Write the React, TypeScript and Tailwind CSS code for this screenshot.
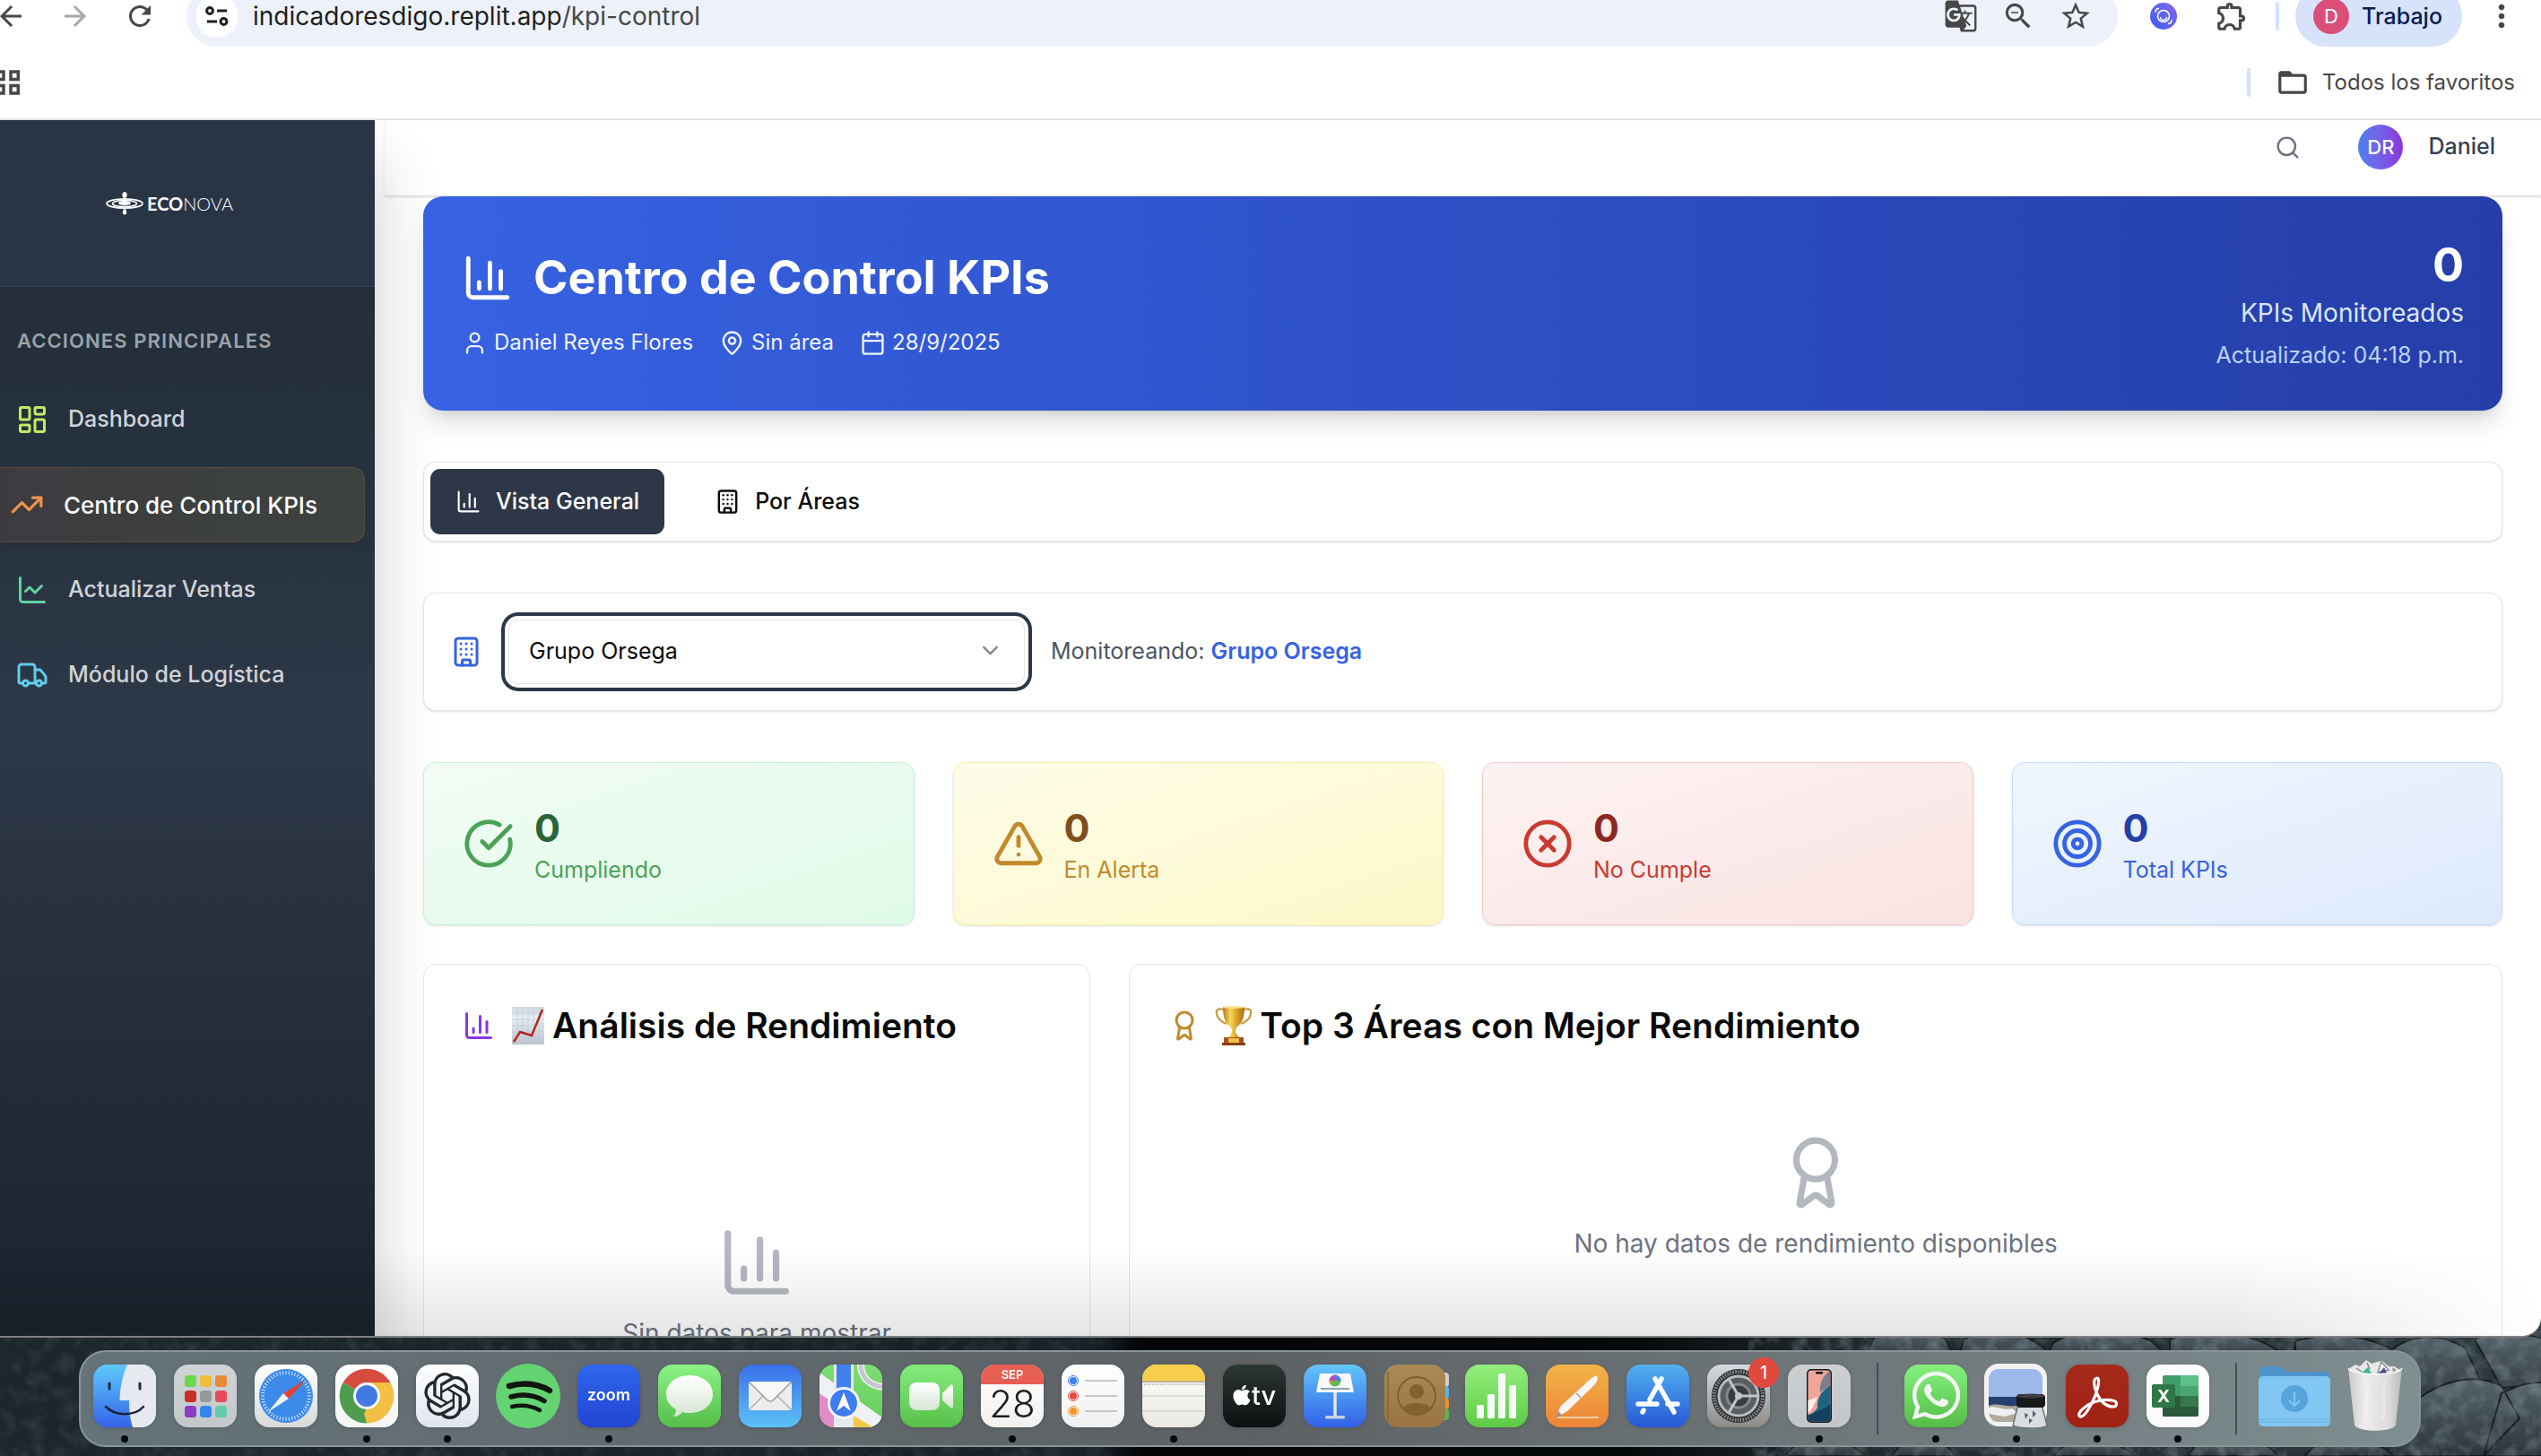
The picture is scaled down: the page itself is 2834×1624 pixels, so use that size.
import type { ComponentType, ReactNode } from "react";
import {
  Award,
  Building,
  Calendar,
  ChartColumn,
  ChartLine,
  ChevronDown,
  CircleCheckBig,
  CircleX,
  LayoutDashboard,
  MapPin,
  Search,
  Target,
  TrendingUp,
  TriangleAlert,
  Truck,
  User,
} from "lucide-react";
import {
  MdArrowBack,
  MdArrowForward,
  MdFolderOpen,
  MdGTranslate,
  MdMoreVert,
  MdOutlineExtension,
  MdRefresh,
  MdStarBorder,
  MdZoomOut,
} from "react-icons/md";
import { FaApple, FaWhatsapp } from "react-icons/fa";
import { SiOpenai } from "react-icons/si";

/* ---------- Browser chrome ---------- */

function BrowserBar() {
  return (
    <header className="relative z-20 h-[134px] shrink-0 overflow-hidden border-b-2 border-[#e1e3e1] bg-white text-[#474747]">
      <div className="-mt-4 flex h-[68px] items-center">
        <button aria-label="Atrás" className="-ml-1.5">
          <MdArrowBack size={36} />
        </button>
        <button aria-label="Adelante" className="ml-9 text-[#a8a8a8]">
          <MdArrowForward size={36} />
        </button>
        <button aria-label="Recargar" className="ml-9">
          <MdRefresh size={36} />
        </button>
        <div className="ml-[34px] flex h-[68px] flex-1 items-center rounded-full bg-[#edf2fa] pr-7 pl-[10px]">
          <button aria-label="Información del sitio" className="flex size-12 items-center justify-center rounded-full bg-white text-[#1f1f1f]">
            <svg width="26" height="26" viewBox="0 0 26 26" fill="none" stroke="currentColor" strokeWidth="3">
              <circle cx="5" cy="7" r="3.4" />
              <path d="M13 7h11M2 19h11" />
              <circle cx="20.5" cy="19" r="3.4" />
            </svg>
          </button>
          <span className="ml-4 text-[28px] leading-9 text-[#1f1f1f]">
            indicadoresdigo.replit.app<span className="text-[#474747]">/kpi-control</span>
          </span>
          <div className="ml-auto flex items-center gap-[26px]">
            <button aria-label="Traducir">
              <MdGTranslate size={38} />
            </button>
            <button aria-label="Zoom">
              <MdZoomOut size={38} />
            </button>
            <button aria-label="Favorito">
              <MdStarBorder size={38} />
            </button>
          </div>
        </div>
        <button aria-label="Extensión" className="ml-9">
          <svg width="30" height="30" viewBox="0 0 30 30" fill="none">
            <defs>
              <linearGradient id="ext" x1="1" y1="0" x2="0" y2="1">
                <stop offset="0" stopColor="#8566f0" />
                <stop offset="1" stopColor="#3b5fe8" />
              </linearGradient>
            </defs>
            <circle cx="15" cy="15" r="15" fill="url(#ext)" />
            <circle cx="15" cy="15" r="6.5" stroke="#fff" strokeWidth="1.5" />
            <path d="M11.5 16a3.5 3.5 0 0 0 7 0M6 11c0-3 1-4.500 4-4.500M24 19c0 3-1 4.500-4 4.500" stroke="#fff" strokeWidth="1.500" />
          </svg>
        </button>
        <button aria-label="Extensiones" className="ml-[42px]">
          <MdOutlineExtension size={38} />
        </button>
        <span className="ml-[30px] h-8 w-1 rounded-full bg-[#d3e1fb]" />
        <button className="ml-[18px] flex h-[68px] items-center gap-[14px] rounded-full bg-[#d7e2fb] pr-[22px] pl-5 text-[#0b1d51]">
          <span className="flex size-10 items-center justify-center rounded-full bg-[#da4f7a] text-[22px] text-white">D</span>
          <span className="text-[25px] leading-9 font-medium">Trabajo</span>
        </button>
        <button aria-label="Menú" className="mr-6 ml-6">
          <MdMoreVert size={40} />
        </button>
      </div>
      <div className="flex h-20 items-center pr-[29px]">
        <button aria-label="Aplicaciones">
          <svg width="22" height="28" viewBox="0 0 22 28" fill="none" stroke="currentColor" strokeWidth="3.500">
            <path d="M-6 2H4v8.500H-6zM12 2h8.300v8.500H12zM-6 17.500H4V26H-6zM12 17.500h8.300V26H12z" />
          </svg>
        </button>
        <span className="ml-auto h-8 w-1 rounded-full bg-[#d3e1fb]" />
        <button className="ml-7 flex items-center gap-[14px] text-[24px] leading-9">
          <MdFolderOpen size={38} />
          Todos los favoritos
        </button>
      </div>
    </header>
  );
}

/* ---------- Sidebar ---------- */

type IconType = ComponentType<{ size?: number; className?: string; strokeWidth?: number }>;

const navItems: { label: string; icon: IconType; color: string; active?: boolean }[] = [
  { label: "Dashboard", icon: LayoutDashboard, color: "text-[#c0ec63]" },
  { label: "Centro de Control KPIs", icon: TrendingUp, color: "text-[#f0954a]", active: true },
  { label: "Actualizar Ventas", icon: ChartLine, color: "text-[#62d29d]" },
  { label: "Módulo de Logística", icon: Truck, color: "text-[#5fcdec]" },
];

function Logo() {
  return (
    <div className="flex items-center gap-1 text-white">
      <svg width="42" height="26" viewBox="0 0 42 26" fill="none" stroke="currentColor">
        <ellipse cx="21" cy="13" rx="20" ry="5.200" strokeWidth="1.800" />
        <ellipse cx="21" cy="13" rx="13.500" ry="3.600" strokeWidth="1.600" />
        <ellipse cx="21" cy="12.500" rx="7" ry="2.400" fill="currentColor" stroke="none" />
        <path d="M21 8v5" strokeWidth="1.500" />
        <ellipse cx="21" cy="3.500" rx="2.600" ry="3.500" fill="currentColor" stroke="none" />
        <path d="M21 18c1.500 2 2.200 3.500 2.200 5a2.200 2.600 0 0 1-4.400 0c0-1.500.7-3 2.200-5z" fill="currentColor" stroke="none" />
      </svg>
      <span className="font-[Lato] text-[20px] leading-6">
        <b className="font-bold">ECO</b>
        <span className="font-light">NOVA</span>
      </span>
    </div>
  );
}

function Sidebar() {
  return (
    <aside className="relative z-10 flex w-[418px] shrink-0 flex-col bg-linear-to-b from-[#1f2a34] via-[#2d3848] to-[#1b232e] shadow-[0_45px_70px_rgba(0,0,0,0.2)]">
      <div className="flex h-[186px] shrink-0 items-center justify-center border-b border-[#36445a] bg-[#293545] pr-10">
        <Logo />
      </div>
      <nav aria-label="Acciones principales" className="flex flex-col pt-[42px]">
        <h2 className="pl-[19px] text-[22px] leading-9 font-semibold tracking-wider text-[#9da2a8]">ACCIONES PRINCIPALES</h2>
        <ul className="mt-7 flex flex-col gap-[11px] pr-[11px]">
          {navItems.map(({ label, icon: Icon, color, active }) => (
            <li key={label}>
              <a
                href="#"
                className={
                  active
                    ? "flex h-[84px] items-center gap-[22px] rounded-r-[14px] border border-l-0 border-[#5e4d3c] bg-linear-to-r from-[#3e3b40] to-[#3c433f] pl-[11px] text-[26px] font-medium text-white shadow-lg"
                    : "flex h-[84px] items-center gap-[22px] pl-[18px] text-[25px] font-medium text-[#d0d3d7]"
                }
              >
                <Icon size={active ? 38 : 36} className={color} />
                {label}
              </a>
            </li>
          ))}
        </ul>
      </nav>
    </aside>
  );
}

/* ---------- Dashboard ---------- */

function TopBar() {
  return (
    <div className="ml-[11px] flex h-[85px] shrink-0 items-start justify-end border-b border-[#dedfe1] bg-white pt-[5px] pr-[51px] shadow-sm">
      <div className="flex h-[50px] items-center">
        <button aria-label="Buscar" className="mr-16 text-[#6b7280]">
          <Search size={29} />
        </button>
        <button className="flex items-center gap-7">
          <span className="flex size-[50px] items-center justify-center rounded-full bg-linear-to-r from-[#4a80f0] to-[#8b33dd] text-[22px] font-medium text-white">
            DR
          </span>
          <span className="text-[25px] font-medium text-[#374151]">Daniel</span>
        </button>
      </div>
    </div>
  );
}

function Meta({ icon: Icon, children }: { icon: IconType; children: ReactNode }) {
  return (
    <span className="flex items-center gap-[7px]">
      <Icon size={29} />
      {children}
    </span>
  );
}

function Banner() {
  return (
    <section className="flex items-center justify-between rounded-[22px] bg-linear-to-r from-[#3762e3] to-[#253ea8] px-[43px] py-11 text-white shadow-[0_18px_27px_-5px_rgba(0,0,0,0.14),0_7px_11px_-7px_rgba(0,0,0,0.12)]">
      <div className="flex flex-col gap-[22px]">
        <h1 className="flex items-center gap-[22px] text-[52px] leading-[65px] font-bold">
          <ChartColumn size={58} />
          Centro de Control KPIs
        </h1>
        <div className="flex items-center gap-[29px] text-[24px] leading-9 text-[#eef3fe]">
          <Meta icon={User}>Daniel Reyes Flores</Meta>
          <Meta icon={MapPin}>Sin área</Meta>
          <Meta icon={Calendar}>28/9/2025</Meta>
        </div>
      </div>
      <div className="text-right">
        <p className="text-[52px] leading-[65px] font-bold">0</p>
        <p className="text-[28px] leading-[43px] text-[#dbe6fb]">KPIs Monitoreados</p>
        <p className="mt-[7px] text-[25px] leading-9 text-[#bcd2f8]">Actualizado: 04:18 p.m.</p>
      </div>
    </section>
  );
}

function Tabs() {
  return (
    <div role="tablist" className="flex shrink-0 gap-7 rounded-[14px] border border-[#e5e5e5] bg-white p-[7px] shadow-sm">
      <button
        role="tab"
        aria-selected="true"
        className="flex h-[73px] items-center gap-4 rounded-[11px] bg-[#2d3748] px-7 text-[25px] font-medium text-white"
      >
        <ChartColumn size={29} strokeWidth={1.8} />
        Vista General
      </button>
      <button role="tab" aria-selected="false" className="flex h-[73px] items-center gap-4 px-7 text-[25px] font-medium text-[#0a0a0a]">
        <Building size={29} />
        Por Áreas
      </button>
    </div>
  );
}

function Filter() {
  return (
    <section className="flex shrink-0 items-center gap-[29px] rounded-[14px] border border-[#e5e5e5] bg-white p-[29px] shadow-sm">
      <Building size={36} className="text-[#3662e3]" />
      <div className="relative w-[576px]">
        <select
          aria-label="Empresa"
          className="h-[72px] w-full appearance-none rounded-[11px] border border-[#e5e5e5] bg-white pl-[22px] text-[25px] text-[#0a0a0a] ring-4 ring-[#2d3748] ring-offset-4 outline-none"
          defaultValue="Grupo Orsega"
        >
          <option>Grupo Orsega</option>
        </select>
        <ChevronDown size={29} className="pointer-events-none absolute top-5 right-6 text-[#858585]" />
      </div>
      <p className="text-[25px] text-[#4b5563]">
        Monitoreando: <strong className="font-semibold text-[#3662e3]">Grupo Orsega</strong>
      </p>
    </section>
  );
}

const stats: { label: string; icon: IconType; card: string; iconColor: string; value: string; text: string }[] = [
  {
    label: "Cumpliendo",
    icon: CircleCheckBig,
    card: "border-[#c6f2d3] from-[#f2fcf5] to-[#dffae8]",
    iconColor: "text-[#4ba255]",
    value: "text-[#2c6438]",
    text: "text-[#4ba255]",
  },
  {
    label: "En Alerta",
    icon: TriangleAlert,
    card: "border-[#fbf0a0] from-[#fefce9] to-[#fdf8c8]",
    iconColor: "text-[#c18a2c]",
    value: "text-[#7d4f1e]",
    text: "text-[#c18a2c]",
  },
  {
    label: "No Cumple",
    icon: CircleX,
    card: "border-[#f6c9c8] from-[#fdf3f2] to-[#f9e3e2]",
    iconColor: "text-[#ca3a31]",
    value: "text-[#8c2822]",
    text: "text-[#ca3a31]",
  },
  {
    label: "Total KPIs",
    icon: Target,
    card: "border-[#c4daf9] from-[#f0f6fe] to-[#dde9fc]",
    iconColor: "text-[#3662e3]",
    value: "text-[#253ea8]",
    text: "text-[#3662e3]",
  },
];

function Stats() {
  return (
    <section className="grid grid-cols-4 gap-[43px]">
      {stats.map(({ label, icon: Icon, card, iconColor, value, text }) => (
        <div key={label} className={`flex items-center gap-[22px] rounded-[14px] border bg-linear-to-br px-[43px] py-[43px] shadow-sm ${card}`}>
          <Icon size={58} className={iconColor} />
          <div>
            <p className={`text-[43px] leading-[58px] font-bold ${value}`}>0</p>
            <p className={`text-[25px] leading-9 ${text}`}>{label}</p>
          </div>
        </div>
      ))}
    </section>
  );
}

function ChartEmoji() {
  return (
    <svg width="38" height="44" viewBox="0 0 38 44" role="img" aria-label="Gráfico">
      <defs>
        <linearGradient id="chartBg" x1="0" y1="0" x2="0" y2="1">
          <stop offset="0" stopColor="#cfd9e2" />
          <stop offset=".3" stopColor="#e6edf4" />
          <stop offset="1" stopColor="#bcc4cd" />
        </linearGradient>
      </defs>
      <rect x="1" y="1" width="36" height="42" fill="url(#chartBg)" />
      <path d="M1 8h36M1 15h36M1 22h36M1 29h36M1 36h36M7 1v42M13 1v42M19 1v42M25 1v42M31 1v42" stroke="#b5c6d6" strokeWidth=".6" />
      <path d="M3 40l7-11 13 4L35 4" fill="none" stroke="#b5221c" strokeWidth="2.400" />
    </svg>
  );
}

function TrophyEmoji() {
  return (
    <svg width="42" height="46" viewBox="0 0 42 46" role="img" aria-label="Trofeo">
      <defs>
        <linearGradient id="gold" x1="0" x2="1">
          <stop offset="0" stopColor="#b9791a" />
          <stop offset=".35" stopColor="#f8d860" />
          <stop offset=".6" stopColor="#e0a52a" />
          <stop offset="1" stopColor="#a96c13" />
        </linearGradient>
      </defs>
      <path d="M9 5C3 3 1 6 2 10c1 6 6 9 11 11M33 5c6-2 8 1 7 5-1 6-6 9-11 11" fill="none" stroke="#c99a3b" strokeWidth="2.200" />
      <path d="M9 2h24c0 13-3 18-8 22-2 2-2 4-2 6 1 3 3 4 4 6H15c1-2 3-3 4-6 0-2 0-4-2-6C12 20 9 15 9 2z" fill="url(#gold)" />
      <ellipse cx="21" cy="2.500" rx="12" ry="1.500" fill="#f9e08a" />
      <path d="M10 36h22v9H10z" fill="#a8521f" />
      <path d="M8 42h26v3H8z" fill="#8a3d16" />
      <path d="M15 37h12v5H15z" fill="#f0c24a" />
    </svg>
  );
}

function Panels() {
  return (
    <section className="grid grid-cols-3 gap-[43px]">
      <article className="h-[620px] rounded-[14px] border border-[#e5e5e5] bg-white p-[43px]">
        <h2 className="flex items-center text-[39px] leading-[50px] font-semibold text-[#0a0a0a]">
          <ChartColumn size={36} className="mr-[18px] text-[#8a37e0]" />
          <ChartEmoji />
          <span className="ml-2 whitespace-nowrap">Análisis de Rendimiento</span>
        </h2>
        <div className="mt-[196px] flex flex-col items-center text-[28px] leading-[43px] text-[#6b7280]">
          <ChartColumn size={86} className="text-[#b3b7bf]" />
          <p className="mt-[15px]">Sin datos para mostrar</p>
        </div>
      </article>
      <article className="col-span-2 rounded-[14px] border border-[#e5e5e5] bg-white p-[43px]">
        <h2 className="flex items-center text-[39px] leading-[50px] font-semibold text-[#0a0a0a]">
          <Award size={36} className="mr-4 text-[#c18a2c]" />
          <TrophyEmoji />
          <span className="ml-2">Top 3 Áreas con Mejor Rendimiento</span>
        </h2>
        <div className="mt-24 flex flex-col items-center text-[28px] leading-[43px] text-[#6b7280]">
          <Award size={86} className="text-[#b3b7bf]" />
          <p className="mt-[15px]">No hay datos de rendimiento disponibles</p>
        </div>
      </article>
    </section>
  );
}

/* ---------- Dock ---------- */

function Tile({ id, from, to, children }: { id: string; from: string; to: string; children?: ReactNode }) {
  return (
    <svg width="70" height="70" viewBox="0 0 70 70" className="drop-shadow-sm">
      <defs>
        <linearGradient id={`t-${id}`} x1="0" y1="0" x2="0" y2="1">
          <stop offset="0" stopColor={from} />
          <stop offset="1" stopColor={to} />
        </linearGradient>
        <clipPath id={`c-${id}`}>
          <rect width="70" height="70" rx="16" />
        </clipPath>
        <linearGradient id={`w-${id}`} x1="0" y1="0" x2="0" y2="1">
          <stop offset="0" stopColor="#ffffff" />
          <stop offset="1" stopColor="#d5e5d2" />
        </linearGradient>
      </defs>
      <g clipPath={`url(#c-${id})`}>
        <rect width="70" height="70" fill={`url(#t-${id})`} />
        {children}
      </g>
    </svg>
  );
}

const launchpadColors = ["#6bd84d", "#f2bd3c", "#e88a35", "#c72f26", "#95999c", "#e64c58", "#8a3cc4", "#3486ee", "#62cbaa"];
const ticks = Array.from({ length: 48 }, (_, i) => i * 7.5);

const mainApps: { name: string; running?: boolean; badge?: string; art: ReactNode }[] = [
  {
    name: "Finder",
    running: true,
    art: (
      <Tile id="finder" from="#5ec9fa" to="#3564ea">
        <path d="M38 0C32 14 30 26 29.500 40H40c0 12 1 20 4 30h26V0z" fill="#e6e9ef" />
        <path d="M18 21v6M52 21v6" stroke="#1c2b45" strokeWidth="3" strokeLinecap="round" />
        <path d="M14 47c11 11 32 11 42 0" fill="none" stroke="#1b2436" strokeWidth="2.500" strokeLinecap="round" />
      </Tile>
    ),
  },
  {
    name: "Launchpad",
    art: (
      <Tile id="launch" from="#d0d4d7" to="#c3c8cb">
        {launchpadColors.map((c, i) => (
          <rect key={c} x={12 + (i % 3) * 17} y={12 + Math.floor(i / 3) * 17} width="13" height="13" rx="3.500" fill={c} />
        ))}
      </Tile>
    ),
  },
  {
    name: "Safari",
    art: (
      <Tile id="safari" from="#ffffff" to="#d9d9da">
        <circle cx="35" cy="35" r="30" fill="#3c8bea" />
        {ticks.map((a) => (
          <path key={a} d="M35 7v4" stroke="#dcecff" strokeWidth="1" transform={`rotate(${a} 35 35)`} />
        ))}
        <path d="M57 17L38 38l-6-6z" fill="#e6402f" />
        <path d="M15 53l17-21 6 6z" fill="#f2f4f7" />
      </Tile>
    ),
  },
  {
    name: "Chrome",
    running: true,
    art: (
      <Tile id="chrome" from="#ffffff" to="#f5f5f5">
        <path d="M35 35L8.600 20A30.500 30.500 0 0 1 61.400 20z" fill="#d84c3e" />
        <path d="M35 35l26.400-15A30.500 30.500 0 0 1 35 65.500z" fill="#f3bf45" />
        <path d="M35 35L35 65.500A30.500 30.500 0 0 1 8.600 20z" fill="#4f9c51" />
        <path d="M35 20h26.400l-13.400 22z" fill="#f3bf45" />
        <path d="M48 42L35 65.500 30 48z" fill="#f3bf45" />
        <path d="M8.600 20L22 43l13 6-8 16z" fill="#4f9c51" />
        <circle cx="35" cy="35" r="15" fill="#fff" />
        <circle cx="35" cy="35" r="12" fill="#4379e3" />
      </Tile>
    ),
  },
  {
    name: "ChatGPT",
    running: true,
    art: (
      <Tile id="gpt" from="#ffffff" to="#dfe5f0">
        <SiOpenai x="9" y="9" size={52} color="#23282e" />
      </Tile>
    ),
  },
  {
    name: "Spotify",
    art: (
      <svg width="72" height="72" viewBox="0 0 72 72">
        <circle cx="36" cy="36" r="36" fill="#63d471" />
        <g fill="none" stroke="#101510" strokeLinecap="round">
          <path d="M15 25c15-4 31-3 45 5" strokeWidth="6.500" />
          <path d="M17 37c13-3.500 26-2 37 4.500" strokeWidth="5.500" />
          <path d="M18 48c11-2.500 21-1.500 31 4" strokeWidth="4.500" />
        </g>
      </svg>
    ),
  },
  {
    name: "Zoom",
    running: true,
    art: (
      <Tile id="zoom" from="#2f66ee" to="#2145d2">
        <text x="35" y="40" textAnchor="middle" fontSize="18" fontWeight="600" fill="#fff">
          zoom
        </text>
      </Tile>
    ),
  },
  {
    name: "Mensajes",
    art: (
      <Tile id="msg" from="#8bf285" to="#55be48">
        <path d="M35 12c15 0 26 9 26 21S50 54 35 54c-3 0-5 0-8-1-2 3-6 5-10 5 2-2 3-5 3-8C13 46 9 40 9 33c0-12 11-21 26-21z" fill="url(#w-msg)" />
      </Tile>
    ),
  },
  {
    name: "Mail",
    art: (
      <Tile id="mail" from="#3a6fe9" to="#5cc2f8">
        <rect x="11" y="19" width="48" height="32" rx="3" fill="#ececec" />
        <path d="M12 50l17-17M58 50L41 33" stroke="#b0b0b0" strokeWidth="1.500" />
        <path d="M12 20l19 19c3 3 5 3 8 0l19-19" fill="#f8f8f8" stroke="#9a9a9a" strokeWidth="1.500" />
      </Tile>
    ),
  },
  {
    name: "Mapas",
    art: (
      <Tile id="maps" from="#7fdd74" to="#63cc5a">
        <path d="M0 32l20 12v26H0z" fill="#e18cc9" />
        <path d="M0 9l70 50v11H55L0 32z" fill="#f0f1f5" />
        <path d="M36 56l24 14H36z" fill="#f4c843" />
        <path d="M46 0c0 14 10 24 26 25" fill="none" stroke="#f0f1f5" strokeWidth="8" />
        <path d="M46 0c0 14 10 24 26 25" fill="none" stroke="#c4c8d0" strokeWidth="5" />
        <path d="M16 0h22v70H16z" fill="#e8e9ee" />
        <path d="M19 0h16v40H19z" fill="#3f80ef" />
        <circle cx="27" cy="43" r="18" fill="#f2f3f7" />
        <circle cx="27" cy="43" r="15" fill="#3c7bf0" />
        <path d="M27 31l8 21-8-6-8 6z" fill="#fff" />
      </Tile>
    ),
  },
  {
    name: "FaceTime",
    art: (
      <Tile id="face" from="#84ec7c" to="#58c04a">
        <rect x="10" y="20" width="34" height="31" rx="8" fill="url(#w-face)" />
        <path d="M47 32l9-9c2-1 3 0 3 2v21c0 2-1 3-3 2l-9-8z" fill="url(#w-face)" />
      </Tile>
    ),
  },
  {
    name: "Calendario",
    running: true,
    art: (
      <Tile id="cal" from="#ffffff" to="#f3f1ef">
        <rect width="70" height="22" fill="#e75f53" />
        <text x="35" y="16" textAnchor="middle" fontSize="13" fontWeight="600" fill="#fff">
          SEP
        </text>
        <text x="35" y="59" textAnchor="middle" fontSize="42" fontWeight="300" fill="#1d1d1d">
          28
        </text>
      </Tile>
    ),
  },
  {
    name: "Recordatorios",
    art: (
      <Tile id="rem" from="#ffffff" to="#f0f0f0">
        {["#3d7ff0", "#e54b3f", "#f0982e"].map((c, i) => (
          <g key={c}>
            <circle cx="13" cy={18 + i * 17} r="5.500" fill="none" stroke={c} strokeWidth="1" />
            <circle cx="13" cy={18 + i * 17} r="4" fill={c} />
            <path d={`M26 ${18 + i * 17}h36`} stroke="#b7b7ba" strokeWidth="1.300" />
          </g>
        ))}
      </Tile>
    ),
  },
  {
    name: "Notas",
    running: true,
    art: (
      <Tile id="notes" from="#fdfdfc" to="#e9e8e2">
        <rect width="70" height="18" fill="#f7ce4b" />
        <path d="M0 19h70" stroke="#a79a70" strokeWidth="1.500" />
        <path d="M2 22h68" stroke="#a8a8a2" strokeWidth="1.500" strokeDasharray="1.500 1.500" />
        <path d="M0 35h70M0 52h70" stroke="#c9c9c5" strokeWidth="1" />
      </Tile>
    ),
  },
  {
    name: "TV",
    art: (
      <Tile id="tv" from="#2c3833" to="#0c0f10">
        <FaApple x="8" y="21" size={26} color="#fff" />
        <text x="32" y="45" fontSize="29" fontWeight="500" fill="#fff">
          tv
        </text>
      </Tile>
    ),
  },
  {
    name: "Keynote",
    art: (
      <Tile id="key" from="#62c6f9" to="#3160e8">
        <path d="M18 10h34l4 21H14z" fill="#f7f9fb" />
        <path d="M19 27h32" stroke="#8ea3b5" strokeWidth="2" />
        <circle cx="35" cy="18" r="6.500" fill="#5cba52" />
        <path d="M35 18v-6.500a6.500 6.500 0 0 1 6.500 6.500z" fill="#3f83e8" />
        <path d="M35 18h-6.500a6.500 6.500 0 0 1 6.500-6.500z" fill="#b34fc0" />
        <path d="M35 18l-6 3a6.500 6.500 0 0 1-.500-3z" fill="#ee8734" />
        <path d="M35 31v27" stroke="#dfe6ee" strokeWidth="3.500" />
        <rect x="24" y="57" width="22" height="3.500" rx="1.500" fill="#c7d0dd" />
      </Tile>
    ),
  },
  {
    name: "Contactos",
    art: (
      <svg width="74" height="70" viewBox="-2 0 74 70">
        <defs>
          <linearGradient id="leather" x1="0" y1="0" x2="0" y2="1">
            <stop offset="0" stopColor="#a98a54" />
            <stop offset="1" stopColor="#9a7443" />
          </linearGradient>
        </defs>
        <rect x="60" y="9" width="12" height="16" rx="4" fill="#cfcfcf" />
        <rect x="60" y="24" width="12" height="14" rx="4" fill="#58b4e6" />
        <rect x="60" y="37" width="12" height="13" rx="4" fill="#e8913a" />
        <rect x="60" y="49" width="12" height="13" rx="4" fill="#57b756" />
        <rect width="68" height="70" rx="15" fill="url(#leather)" />
        <circle cx="36" cy="35" r="21" fill="none" stroke="#7d5c30" strokeWidth="1.800" />
        <circle cx="36" cy="30" r="8" fill="#84622f" />
        <path d="M21 49c3-8 27-8 30 0-7 9-23 9-30 0z" fill="#84622f" />
        <path d="M4 8v54" stroke="#85643a" strokeWidth="1.500" />
      </svg>
    ),
  },
  {
    name: "Numbers",
    art: (
      <Tile id="num" from="#93ee7c" to="#5dcb45">
        <g fill="#f7fbf6">
          <rect x="13" y="45" width="8" height="15" rx="1.500" />
          <rect x="25" y="33" width="8" height="27" rx="1.500" />
          <rect x="37" y="10" width="8" height="50" rx="1.500" />
          <rect x="49" y="23" width="8" height="37" rx="1.500" />
        </g>
      </Tile>
    ),
  },
  {
    name: "Pages",
    art: (
      <Tile id="pages" from="#f2b448" to="#ee8336">
        <path d="M12 59h47" stroke="#f7cfa0" strokeWidth="2" />
        <path d="M57 13c2 1 1 4-2 9L24 52l-12 7 4-12L51 15c3-2 5-3 6-2z" fill="#f8f6f4" />
        <path d="M12 59l2-6 3 3zM34 32l5 5" fill="#8d8a86" stroke="#9b9692" strokeWidth="1.200" />
      </Tile>
    ),
  },
  {
    name: "App Store",
    art: (
      <Tile id="store" from="#52b2f0" to="#2657d6">
        <g stroke="#f8fbff" strokeWidth="5.500" strokeLinecap="round">
          <path d="M39 16L26 39M32 16l21 37M13 44h21M46 44h11M19 51l-1 2" />
        </g>
      </Tile>
    ),
  },
  {
    name: "Ajustes",
    badge: "1",
    art: (
      <Tile id="set" from="#d5dce1" to="#8e8a88">
        <circle cx="35" cy="35" r="30" fill="#2e2f31" />
        <circle cx="35" cy="35" r="27" fill="none" stroke="#8d9092" strokeWidth="4" strokeDasharray="1.500 1.500" />
        <circle cx="35" cy="35" r="22" fill="#5b5e60" stroke="#b8bcbe" strokeWidth="3" />
        <circle cx="35" cy="35" r="13" fill="#3a3c3e" stroke="#85898b" strokeWidth="3" />
        <path d="M35 35h22M35 35L24 16M35 35L24 54" stroke="#c3c7c9" strokeWidth="3" />
        <circle cx="35" cy="35" r="4" fill="#c3c7c9" />
      </Tile>
    ),
  },
  {
    name: "Duplicación del iPhone",
    running: true,
    art: (
      <Tile id="iphone" from="#cdcfd1" to="#c3c6c8">
        <rect x="21" y="5" width="28" height="60" rx="5" fill="#15181b" />
        <rect x="22.500" y="6.500" width="25" height="57" rx="4" fill="#f0a59a" />
        <path d="M47 7c-8 5-12 14-11 24l11-8z" fill="#77808c" />
        <path d="M33 36c-3 8-6 14-10.500 19V40z" fill="#fbeee9" />
        <path d="M47.500 23C36 30 32 40 33 48c-2 4-6 7-10.500 8v4a4 4 0 0 0 4 3.500h17a4 4 0 0 0 4-4z" fill="#1d6384" />
        <path d="M47.500 44c-8 6-16 10-25 13v3a4 4 0 0 0 4 3.500h17a4 4 0 0 0 4-4z" fill="#15405f" />
        <rect x="31" y="8" width="8" height="2.500" rx="1.200" fill="#101215" />
      </Tile>
    ),
  },
];

const extraApps: { name: string; running?: boolean; badge?: string; art: ReactNode }[] = [
  {
    name: "WhatsApp",
    running: true,
    art: (
      <Tile id="wa" from="#86f07f" to="#54bd47">
        <FaWhatsapp x="5" y="4" size={61} color="#f4f6f4" />
      </Tile>
    ),
  },
  {
    name: "Vista Previa",
    running: true,
    art: (
      <svg width="74" height="74" viewBox="0 0 74 74">
        <rect x="1" y="1" width="70" height="70" rx="16" fill="#f3f2f0" />
        <clipPath id="prev">
          <rect x="6" y="7" width="60" height="59" rx="11" />
        </clipPath>
        <g clipPath="url(#prev)">
          <rect x="6" y="7" width="60" height="32" fill="#9db8ea" />
          <rect x="6" y="38" width="60" height="14" fill="#253f70" />
          <path d="M6 48c10-4 20 2 30 0s20 2 30 0v20H6z" fill="#b3a99c" />
          <path d="M6 50c8-3 16 4 26 1l6 5-14 4-18-3z" fill="#ecf0f3" />
        </g>
        <path d="M39 46h26l6 24c-6 4-30 4-38 0z" fill="#d9dddf" stroke="#6f7678" strokeWidth="1.500" />
        <path d="M46 56l4 2-3 5zM55 53l4 4-4 4zM51 62l4 2-4 4z" fill="#4f6272" />
        <rect x="37" y="35" width="32" height="15" rx="4" fill="#17181a" />
        <ellipse cx="53" cy="37" rx="15" ry="2.500" fill="#3c3e40" />
      </svg>
    ),
  },
  {
    name: "Acrobat",
    running: true,
    art: (
      <Tile id="acro" from="#a62a1c" to="#a02215">
        <path
          d="M35 15c-5 0-4 10 0 18 4 9 11 14 17 14 6 0 6-6 0-7-9-2-22 1-30 7-7 5-9 10-6 11 4 1 9-7 14-17 5-9 9-26 5-26z"
          fill="none"
          stroke="#fff"
          strokeWidth="3.200"
          strokeLinejoin="round"
        />
      </Tile>
    ),
  },
  {
    name: "Excel",
    running: true,
    art: (
      <Tile id="xl" from="#ffffff" to="#fafafa">
        <rect x="18" y="12" width="40" height="46" rx="2" fill="#3f9e68" />
        <path d="M38 12h18a2 2 0 0 1 2 2v10H38z" fill="#5cc088" />
        <path d="M38 24h20v11H38z" fill="#4aa671" />
        <path d="M18 35h20v23H20a2 2 0 0 1-2-2zM38 47h20v9a2 2 0 0 1-2 2H38z" fill="#2c5a3a" />
        <path d="M38 35h20v12H38z" fill="#36794b" />
        <rect x="6" y="22" width="26" height="26" rx="2" fill="#2e7846" />
        <text x="19" y="42" textAnchor="middle" fontSize="19" fontWeight="700" fill="#fff">
          X
        </text>
      </Tile>
    ),
  },
];

const places: { name: string; running?: boolean; badge?: string; art: ReactNode }[] = [
  {
    name: "Descargas",
    art: (
      <svg width="80" height="70" viewBox="0 0 80 70">
        <path d="M1 8c0-4 2-6 6-6h16c5 0 6 6 11 6h40c4 0 5 2 5 5v20H1z" fill="#4d94cb" />
        <rect x="0" y="13" width="80" height="56" rx="5" fill="#82c6f3" />
        <path d="M0 61h80M0 64h80" stroke="#66aee0" strokeWidth="1" />
        <circle cx="40" cy="38" r="15" fill="#57a3dc" />
        <path d="M40 31v14M34 40l6 6 6-6" fill="none" stroke="#82c6f3" strokeWidth="2.200" />
      </svg>
    ),
  },
  {
    name: "Papelera",
    art: (
      <svg width="62" height="80" viewBox="0 0 62 80">
        <defs>
          <linearGradient id="bin" x1="0" x2="1">
            <stop offset="0" stopColor="#c9c9c8" />
            <stop offset=".3" stopColor="#ededec" />
            <stop offset=".75" stopColor="#dedddb" />
            <stop offset="1" stopColor="#b9b9b8" />
          </linearGradient>
        </defs>
        <path d="M3 9l6-4 5 2 7-7 6 4 6-2 6-1 7 6 6 0 7 4-2 9H5z" fill="#e8e8e6" />
        <path d="M10 9l6 4M22 3l3 7M38 2l-4 12 12-3z" stroke="#85888a" strokeWidth="1.500" fill="#fff" />
        <path d="M15 15l8-7 4 7z" fill="#49b28c" />
        <path d="M35 15l6-7 4 8z" fill="#4a4f8c" />
        <path d="M50 8l5 3-4 4z" fill="#9a9c9e" />
        <path d="M1 9c4 9 56 9 60 0l-7 63c-1 9-45 9-46 0z" fill="url(#bin)" />
        <path d="M1 9c4 9 56 9 60 0" fill="none" stroke="#fafafa" strokeWidth="1.500" />
        <path d="M22 26c4 12-6 30 2 42M42 24c-6 14 4 26-3 44" stroke="#fff" strokeOpacity=".3" strokeWidth="3" fill="none" />
      </svg>
    ),
  },
];

function DockItem({ name, running, badge, art }: { name: string; running?: boolean; badge?: string; art: ReactNode }) {
  return (
    <button aria-label={name} className="relative flex h-full w-[90px] items-center justify-center pb-[6px]">
      {art}
      {badge && (
        <span className="absolute top-[6px] right-0 flex size-[34px] items-center justify-center rounded-full bg-[#e2493d] text-[20px] text-white">
          {badge}
        </span>
      )}
      {running && <span className="absolute bottom-[3px] left-[41px] size-2 rounded-full bg-[#05090c]" />}
    </button>
  );
}

function DockSeparator() {
  return (
    <span className="flex h-full w-10 items-center justify-center">
      <span className="h-20 w-[2px] bg-[#3f4e55]" />
    </span>
  );
}

function Dock() {
  return (
    <footer className="flex h-[132px] shrink-0 items-start justify-center pt-[14px] pr-[46px]">
      <div className="flex h-[108px] items-center rounded-[30px] border-2 border-[#899599] bg-linear-to-r from-[#65747a] from-0% via-[#5d6164] via-50% to-[#7f8e90] px-1">
        {mainApps.map((a) => (
          <DockItem key={a.name} {...a} />
        ))}
        <DockSeparator />
        {extraApps.map((a) => (
          <DockItem key={a.name} {...a} />
        ))}
        <DockSeparator />
        {places.map((a) => (
          <DockItem key={a.name} {...a} />
        ))}
      </div>
    </footer>
  );
}

function Wallpaper() {
  return (
    <svg className="absolute inset-x-0 bottom-0 h-40 w-full" viewBox="0 0 2834 160" preserveAspectRatio="none" aria-hidden="true">
      <defs>
        <linearGradient id="wall" x1="0" x2="1">
          <stop offset="0" stopColor="#1c272c" />
          <stop offset=".43" stopColor="#172127" />
          <stop offset=".45" stopColor="#030405" />
          <stop offset=".64" stopColor="#06090a" />
          <stop offset=".72" stopColor="#1f282b" />
          <stop offset="1" stopColor="#2c393f" />
        </linearGradient>
        <filter id="grain" x="0" y="0" width="1" height="1">
          <feTurbulence type="fractalNoise" baseFrequency="0.06" numOctaves="4" seed="4" />
          <feColorMatrix values="0 0 0 0 0.35  0 0 0 0 0.43  0 0 0 0 0.47  1.6 0 0 0 -0.65" />
        </filter>
        <linearGradient id="rock" x1="0" y1="0" x2="0" y2="1">
          <stop offset="0" stopColor="#56636a" />
          <stop offset="1" stopColor="#2b363b" />
        </linearGradient>
      </defs>
      <rect width="2834" height="160" fill="url(#wall)" />
      <g fill="url(#rock)" stroke="#141c20" strokeWidth="2">
        <path d="M2090 28c20-12 60-14 80 2l10 20h-100zM2190 30c30-16 70-8 90 10l4 12h-100z" />
        <path d="M2290 34c30-20 80-16 110-2l20 20h-140zM2420 30c40-14 90-8 120 12l10 12h-130zM2560 32c40-12 80-6 110 10l10 14h-120z" />
        <path d="M2660 50c20-26 60-30 90-10l20 44-50 20-50-8zM2760 30c20-10 50-8 80 0v50l-50 4z" />
        <path d="M2690 102c30-26 70-36 100-20l20 36-40 42h-110zM2790 90c20-10 30-12 50-12v82h-70z" />
        <path d="M2000 150c20-12 60-12 80 10h-90zM2120 148c20-10 50-8 60 12h-70zM2300 150c30-12 60-10 80 10h-90zM2450 146c40-10 80-4 90 14h-100zM2580 150c30-14 70-10 90 10h-100z" />
      </g>
      <rect width="1240" height="160" filter="url(#grain)" opacity=".18" />
      <rect x="1950" width="884" height="160" filter="url(#grain)" opacity=".5" />
    </svg>
  );
}

export default function App() {
  return (
    <div className="relative flex h-screen flex-col overflow-hidden bg-[#11181b] font-[Inter,sans-serif]">
      <Wallpaper />
      <div className="relative flex min-h-0 flex-1 flex-col overflow-hidden rounded-br-[22px] border-b-2 border-[#808181] bg-white">
        <BrowserBar />
        <div className="flex min-h-0 flex-1">
          <Sidebar />
          <div className="flex min-w-0 flex-1 flex-col">
            <TopBar />
            <main className="relative z-10 flex min-h-0 flex-1 flex-col gap-[57px] overflow-hidden pr-[43px] pl-[54px]">
              <Banner />
              <Tabs />
              <Filter />
              <div className="flex flex-col gap-[43px]">
                <Stats />
                <Panels />
              </div>
            </main>
          </div>
        </div>
        <div className="pointer-events-none absolute inset-x-0 bottom-0 z-20 h-24 bg-linear-to-t from-black/10 to-transparent [mask-image:linear-gradient(to_left,transparent,black_12%)]" />
      </div>
      <div className="relative">
        <Dock />
      </div>
    </div>
  );
}
